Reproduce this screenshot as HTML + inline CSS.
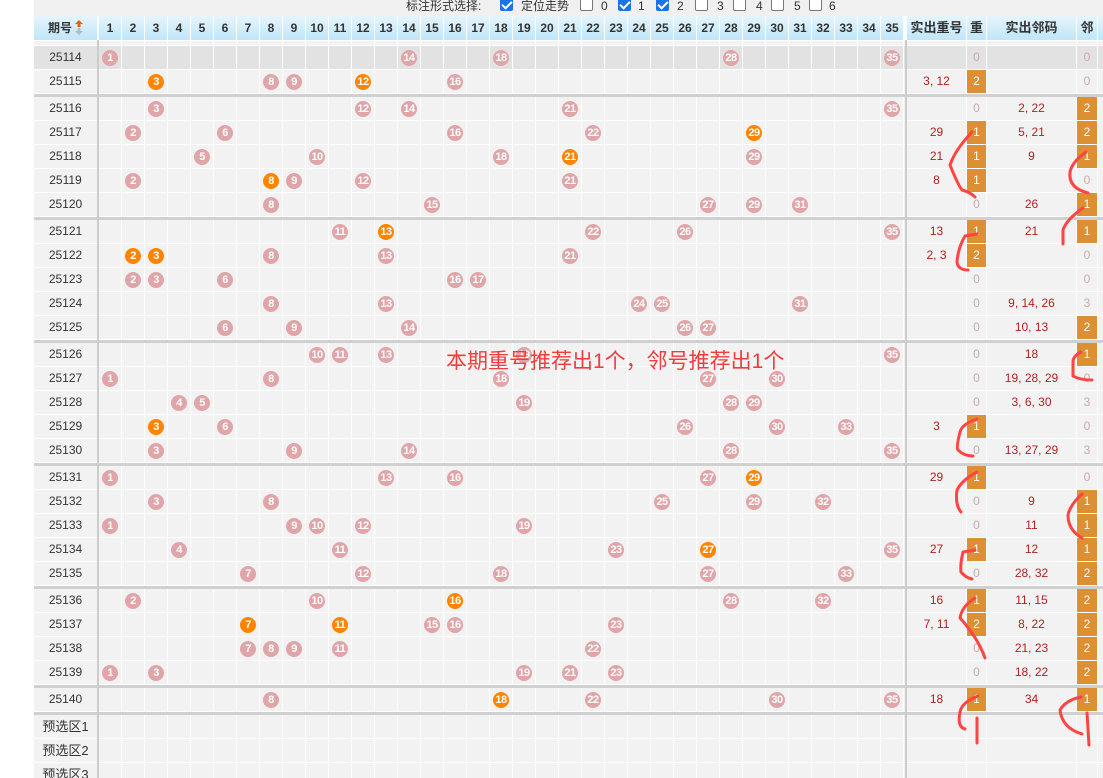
<!DOCTYPE html>
<html><head><meta charset="utf-8"><style>
*{margin:0;padding:0;box-sizing:border-box}
html,body{width:1103px;height:778px;overflow:hidden}
body{background:#fff;position:relative;font-family:"Liberation Sans","Noto Sans CJK SC",sans-serif;font-size:12px;color:#333}
.top{position:absolute;left:34px;top:0;width:1069px;height:16px;background:#f0f0f0}
.t{position:absolute;top:-1px;font-size:12px;color:#333;line-height:14px}
.cb{position:absolute;top:-2px;width:13px;height:13px;border:1px solid #777;border-radius:2px;background:#fff}
.cb.on{background:#1a73e8;border-color:#1a73e8}
.cb.on:after{content:"";position:absolute;left:3px;top:0px;width:4px;height:8px;border:solid #fff;border-width:0 2px 2px 0;transform:rotate(45deg)}
.r{position:absolute;left:0;width:1103px;height:23px}
.r>div{position:absolute;top:0;height:23px;background:#f2f2f2;text-align:center;line-height:23px}
.p{left:34px;width:63px;color:#333;font-size:12px}
.n{left:99px;width:806px;background:repeating-linear-gradient(to right,#f2f2f2 0 22px,#fff 22px 23px)!important}
.c1{left:907px;width:59px;color:#b22222}
.c2{left:967px;width:19px;color:#ccaaaa}
.c3{left:987px;width:89px;color:#b22222}
.c4{left:1077px;width:20px;color:#ccaaaa}
.c5{left:1098px;width:5px}
.bx{background:#dc8f33!important;color:#fff!important}
.hv>div{background:#e2e2e2}
.hv>.n{background:repeating-linear-gradient(to right,#e2e2e2 0 22px,#fff 22px 23px)!important}
.h>div{background:linear-gradient(#e6f5fc,#bfe6f9)!important;font-weight:bold;color:#333;font-size:12px;height:24px;line-height:24px}
.h>.n{background:none!important}
.hn{position:absolute;top:0;width:22px;height:24px;background:linear-gradient(#e6f5fc,#bfe6f9);text-align:center;font-weight:bold;font-size:12px;line-height:24px}
.b{position:absolute;top:4px;width:16px;height:16px;border-radius:50%;background:#e0a5a8;color:#fff;font-weight:bold;font-size:11px;line-height:16px;text-align:center;font-style:normal;letter-spacing:-.5px}
.o{background:#ff8400}
.sep{position:absolute;left:34px;width:1069px;height:3px;background:#d0d0d0}
.vl{position:absolute;top:40px;width:2px;height:738px;background:#ccc}
</style></head><body>
<div class="top"></div>
<span class="t" style="left:406px">标注形式选择:</span>
<span class="cb on" style="left:500px"></span><span class="t" style="left:521px">定位走势</span>
<span class="cb" style="left:580px"></span><span class="t" style="left:601px">0</span>
<span class="cb on" style="left:618px"></span><span class="t" style="left:638px">1</span>
<span class="cb on" style="left:656px"></span><span class="t" style="left:677px">2</span>
<span class="cb" style="left:695px"></span><span class="t" style="left:717px">3</span>
<span class="cb" style="left:733px"></span><span class="t" style="left:756px">4</span>
<span class="cb" style="left:771px"></span><span class="t" style="left:794px">5</span>
<span class="cb" style="left:809px"></span><span class="t" style="left:829px">6</span>

<div class="r h" style="top:16px;height:24px">
<div class="p" style="width:63px;text-align:left;padding-left:14px">期号<svg width="10" height="16" style="position:absolute;left:40px;top:4px"><path d="M5 0 L9 4 L6.5 4 L6.5 7 L3.5 7 L3.5 4 L1 4Z" fill="#e8620a"/><path d="M5 15 L9 11 L6.5 11 L6.5 8 L3.5 8 L3.5 11 L1 11Z" fill="#bbb"/></svg></div>
<div class="n" style="width:806px">
<span class="hn" style="left:0">1</span><span class="hn" style="left:23px">2</span><span class="hn" style="left:46px">3</span><span class="hn" style="left:69px">4</span><span class="hn" style="left:92px">5</span><span class="hn" style="left:115px">6</span><span class="hn" style="left:138px">7</span><span class="hn" style="left:161px">8</span><span class="hn" style="left:184px">9</span><span class="hn" style="left:207px">10</span><span class="hn" style="left:230px">11</span><span class="hn" style="left:253px">12</span><span class="hn" style="left:276px">13</span><span class="hn" style="left:299px">14</span><span class="hn" style="left:322px">15</span><span class="hn" style="left:345px">16</span><span class="hn" style="left:368px">17</span><span class="hn" style="left:391px">18</span><span class="hn" style="left:414px">19</span><span class="hn" style="left:437px">20</span><span class="hn" style="left:460px">21</span><span class="hn" style="left:483px">22</span><span class="hn" style="left:506px">23</span><span class="hn" style="left:529px">24</span><span class="hn" style="left:552px">25</span><span class="hn" style="left:575px">26</span><span class="hn" style="left:598px">27</span><span class="hn" style="left:621px">28</span><span class="hn" style="left:644px">29</span><span class="hn" style="left:667px">30</span><span class="hn" style="left:690px">31</span><span class="hn" style="left:713px">32</span><span class="hn" style="left:736px">33</span><span class="hn" style="left:759px">34</span><span class="hn" style="left:782px">35</span>
</div>
<div class="c1" style="width:59px;font-size:13px">实出重号</div><div class="c2" style="font-size:13px">重</div><div class="c3" style="font-size:13px">实出邻码</div><div class="c4" style="font-size:13px">邻</div><div class="c5"></div>
</div>
<div class="r" style="top:41px;height:4px"><div class="p" style="height:4px"></div><div class="n" style="height:4px"></div><div class="c1" style="height:4px"></div><div class="c2" style="height:4px"></div><div class="c3" style="height:4px"></div><div class="c4" style="height:4px"></div><div class="c5" style="height:4px"></div></div>

<div class="r hv" style="top:46px"><div class="p">25114</div><div class="n"></div><div class="c1"></div><div class="c2">0</div><div class="c3"></div><div class="c4">0</div><div class="c5"></div>
<i class="b" style="left:102px">1</i><i class="b" style="left:401px">14</i><i class="b" style="left:493px">18</i><i class="b" style="left:723px">28</i><i class="b" style="left:884px">35</i></div>
<div class="r" style="top:70px"><div class="p">25115</div><div class="n"></div><div class="c1">3, 12</div><div class="c2 bx">2</div><div class="c3"></div><div class="c4">0</div><div class="c5"></div>
<i class="b o" style="left:148px">3</i><i class="b" style="left:263px">8</i><i class="b" style="left:286px">9</i><i class="b o" style="left:355px">12</i><i class="b" style="left:447px">16</i></div>
<div class="sep" style="top:94px"></div>

<div class="r" style="top:97px"><div class="p">25116</div><div class="n"></div><div class="c1"></div><div class="c2">0</div><div class="c3">2, 22</div><div class="c4 bx">2</div><div class="c5"></div>
<i class="b" style="left:148px">3</i><i class="b" style="left:355px">12</i><i class="b" style="left:401px">14</i><i class="b" style="left:562px">21</i><i class="b" style="left:884px">35</i></div>
<div class="r" style="top:121px"><div class="p">25117</div><div class="n"></div><div class="c1">29</div><div class="c2 bx">1</div><div class="c3">5, 21</div><div class="c4 bx">2</div><div class="c5"></div>
<i class="b" style="left:125px">2</i><i class="b" style="left:217px">6</i><i class="b" style="left:447px">16</i><i class="b" style="left:585px">22</i><i class="b o" style="left:746px">29</i></div>
<div class="r" style="top:145px"><div class="p">25118</div><div class="n"></div><div class="c1">21</div><div class="c2 bx">1</div><div class="c3">9</div><div class="c4 bx">1</div><div class="c5"></div>
<i class="b" style="left:194px">5</i><i class="b" style="left:309px">10</i><i class="b" style="left:493px">18</i><i class="b o" style="left:562px">21</i><i class="b" style="left:746px">29</i></div>
<div class="r" style="top:169px"><div class="p">25119</div><div class="n"></div><div class="c1">8</div><div class="c2 bx">1</div><div class="c3"></div><div class="c4">0</div><div class="c5"></div>
<i class="b" style="left:125px">2</i><i class="b o" style="left:263px">8</i><i class="b" style="left:286px">9</i><i class="b" style="left:355px">12</i><i class="b" style="left:562px">21</i></div>
<div class="r" style="top:193px"><div class="p">25120</div><div class="n"></div><div class="c1"></div><div class="c2">0</div><div class="c3">26</div><div class="c4 bx">1</div><div class="c5"></div>
<i class="b" style="left:263px">8</i><i class="b" style="left:424px">15</i><i class="b" style="left:700px">27</i><i class="b" style="left:746px">29</i><i class="b" style="left:792px">31</i></div>
<div class="sep" style="top:217px"></div>

<div class="r" style="top:220px"><div class="p">25121</div><div class="n"></div><div class="c1">13</div><div class="c2 bx">1</div><div class="c3">21</div><div class="c4 bx">1</div><div class="c5"></div>
<i class="b" style="left:332px">11</i><i class="b o" style="left:378px">13</i><i class="b" style="left:585px">22</i><i class="b" style="left:677px">26</i><i class="b" style="left:884px">35</i></div>
<div class="r" style="top:244px"><div class="p">25122</div><div class="n"></div><div class="c1">2, 3</div><div class="c2 bx">2</div><div class="c3"></div><div class="c4">0</div><div class="c5"></div>
<i class="b o" style="left:125px">2</i><i class="b o" style="left:148px">3</i><i class="b" style="left:263px">8</i><i class="b" style="left:378px">13</i><i class="b" style="left:562px">21</i></div>
<div class="r" style="top:268px"><div class="p">25123</div><div class="n"></div><div class="c1"></div><div class="c2">0</div><div class="c3"></div><div class="c4">0</div><div class="c5"></div>
<i class="b" style="left:125px">2</i><i class="b" style="left:148px">3</i><i class="b" style="left:217px">6</i><i class="b" style="left:447px">16</i><i class="b" style="left:470px">17</i></div>
<div class="r" style="top:292px"><div class="p">25124</div><div class="n"></div><div class="c1"></div><div class="c2">0</div><div class="c3">9, 14, 26</div><div class="c4">3</div><div class="c5"></div>
<i class="b" style="left:263px">8</i><i class="b" style="left:378px">13</i><i class="b" style="left:631px">24</i><i class="b" style="left:654px">25</i><i class="b" style="left:792px">31</i></div>
<div class="r" style="top:316px"><div class="p">25125</div><div class="n"></div><div class="c1"></div><div class="c2">0</div><div class="c3">10, 13</div><div class="c4 bx">2</div><div class="c5"></div>
<i class="b" style="left:217px">6</i><i class="b" style="left:286px">9</i><i class="b" style="left:401px">14</i><i class="b" style="left:677px">26</i><i class="b" style="left:700px">27</i></div>
<div class="sep" style="top:340px"></div>

<div class="r" style="top:343px"><div class="p">25126</div><div class="n"></div><div class="c1"></div><div class="c2">0</div><div class="c3">18</div><div class="c4 bx">1</div><div class="c5"></div>
<i class="b" style="left:309px">10</i><i class="b" style="left:332px">11</i><i class="b" style="left:378px">13</i><i class="b" style="left:516px">19</i><i class="b" style="left:884px">35</i></div>
<div class="r" style="top:367px"><div class="p">25127</div><div class="n"></div><div class="c1"></div><div class="c2">0</div><div class="c3">19, 28, 29</div><div class="c4">0</div><div class="c5"></div>
<i class="b" style="left:102px">1</i><i class="b" style="left:263px">8</i><i class="b" style="left:493px">18</i><i class="b" style="left:700px">27</i><i class="b" style="left:769px">30</i></div>
<div class="r" style="top:391px"><div class="p">25128</div><div class="n"></div><div class="c1"></div><div class="c2">0</div><div class="c3">3, 6, 30</div><div class="c4">3</div><div class="c5"></div>
<i class="b" style="left:171px">4</i><i class="b" style="left:194px">5</i><i class="b" style="left:516px">19</i><i class="b" style="left:723px">28</i><i class="b" style="left:746px">29</i></div>
<div class="r" style="top:415px"><div class="p">25129</div><div class="n"></div><div class="c1">3</div><div class="c2 bx">1</div><div class="c3"></div><div class="c4">0</div><div class="c5"></div>
<i class="b o" style="left:148px">3</i><i class="b" style="left:217px">6</i><i class="b" style="left:677px">26</i><i class="b" style="left:769px">30</i><i class="b" style="left:838px">33</i></div>
<div class="r" style="top:439px"><div class="p">25130</div><div class="n"></div><div class="c1"></div><div class="c2">0</div><div class="c3">13, 27, 29</div><div class="c4">3</div><div class="c5"></div>
<i class="b" style="left:148px">3</i><i class="b" style="left:286px">9</i><i class="b" style="left:401px">14</i><i class="b" style="left:723px">28</i><i class="b" style="left:884px">35</i></div>
<div class="sep" style="top:463px"></div>

<div class="r" style="top:466px"><div class="p">25131</div><div class="n"></div><div class="c1">29</div><div class="c2 bx">1</div><div class="c3"></div><div class="c4">0</div><div class="c5"></div>
<i class="b" style="left:102px">1</i><i class="b" style="left:378px">13</i><i class="b" style="left:447px">16</i><i class="b" style="left:700px">27</i><i class="b o" style="left:746px">29</i></div>
<div class="r" style="top:490px"><div class="p">25132</div><div class="n"></div><div class="c1"></div><div class="c2">0</div><div class="c3">9</div><div class="c4 bx">1</div><div class="c5"></div>
<i class="b" style="left:148px">3</i><i class="b" style="left:263px">8</i><i class="b" style="left:654px">25</i><i class="b" style="left:746px">29</i><i class="b" style="left:815px">32</i></div>
<div class="r" style="top:514px"><div class="p">25133</div><div class="n"></div><div class="c1"></div><div class="c2">0</div><div class="c3">11</div><div class="c4 bx">1</div><div class="c5"></div>
<i class="b" style="left:102px">1</i><i class="b" style="left:286px">9</i><i class="b" style="left:309px">10</i><i class="b" style="left:355px">12</i><i class="b" style="left:516px">19</i></div>
<div class="r" style="top:538px"><div class="p">25134</div><div class="n"></div><div class="c1">27</div><div class="c2 bx">1</div><div class="c3">12</div><div class="c4 bx">1</div><div class="c5"></div>
<i class="b" style="left:171px">4</i><i class="b" style="left:332px">11</i><i class="b" style="left:608px">23</i><i class="b o" style="left:700px">27</i><i class="b" style="left:884px">35</i></div>
<div class="r" style="top:562px"><div class="p">25135</div><div class="n"></div><div class="c1"></div><div class="c2">0</div><div class="c3">28, 32</div><div class="c4 bx">2</div><div class="c5"></div>
<i class="b" style="left:240px">7</i><i class="b" style="left:355px">12</i><i class="b" style="left:493px">18</i><i class="b" style="left:700px">27</i><i class="b" style="left:838px">33</i></div>
<div class="sep" style="top:586px"></div>

<div class="r" style="top:589px"><div class="p">25136</div><div class="n"></div><div class="c1">16</div><div class="c2 bx">1</div><div class="c3">11, 15</div><div class="c4 bx">2</div><div class="c5"></div>
<i class="b" style="left:125px">2</i><i class="b" style="left:309px">10</i><i class="b o" style="left:447px">16</i><i class="b" style="left:723px">28</i><i class="b" style="left:815px">32</i></div>
<div class="r" style="top:613px"><div class="p">25137</div><div class="n"></div><div class="c1">7, 11</div><div class="c2 bx">2</div><div class="c3">8, 22</div><div class="c4 bx">2</div><div class="c5"></div>
<i class="b o" style="left:240px">7</i><i class="b o" style="left:332px">11</i><i class="b" style="left:424px">15</i><i class="b" style="left:447px">16</i><i class="b" style="left:608px">23</i></div>
<div class="r" style="top:637px"><div class="p">25138</div><div class="n"></div><div class="c1"></div><div class="c2">0</div><div class="c3">21, 23</div><div class="c4 bx">2</div><div class="c5"></div>
<i class="b" style="left:240px">7</i><i class="b" style="left:263px">8</i><i class="b" style="left:286px">9</i><i class="b" style="left:332px">11</i><i class="b" style="left:585px">22</i></div>
<div class="r" style="top:661px"><div class="p">25139</div><div class="n"></div><div class="c1"></div><div class="c2">0</div><div class="c3">18, 22</div><div class="c4 bx">2</div><div class="c5"></div>
<i class="b" style="left:102px">1</i><i class="b" style="left:148px">3</i><i class="b" style="left:516px">19</i><i class="b" style="left:562px">21</i><i class="b" style="left:608px">23</i></div>
<div class="sep" style="top:685px"></div>

<div class="r" style="top:688px"><div class="p">25140</div><div class="n"></div><div class="c1">18</div><div class="c2 bx">1</div><div class="c3">34</div><div class="c4 bx">1</div><div class="c5"></div>
<i class="b" style="left:263px">8</i><i class="b o" style="left:493px">18</i><i class="b" style="left:585px">22</i><i class="b" style="left:769px">30</i><i class="b" style="left:884px">35</i></div>
<div class="sep" style="top:712px"></div>

<div class="r" style="top:715px"><div class="p" style="font-size:13px">预选区1</div><div class="n"></div><div class="c1"></div><div class="c2"></div><div class="c3"></div><div class="c4"></div><div class="c5"></div></div>
<div class="r" style="top:739px"><div class="p" style="font-size:13px">预选区2</div><div class="n"></div><div class="c1"></div><div class="c2"></div><div class="c3"></div><div class="c4"></div><div class="c5"></div></div>
<div class="r" style="top:763px;height:15px"><div class="p" style="font-size:13px">预选区3</div><div class="n"></div><div class="c1"></div><div class="c2"></div><div class="c3"></div><div class="c4"></div><div class="c5"></div></div>

<div class="vl" style="left:97px"></div>
<div class="vl" style="left:905px"></div>

<div style="position:absolute;left:446px;top:349px;font-size:21px;color:#f03c3c;white-space:nowrap;line-height:26px">本期重号推荐出1个，邻号推荐出1个</div>

<svg width="1103" height="778" style="position:absolute;left:0;top:0" fill="none" stroke="#f44" stroke-width="3" stroke-linecap="round" stroke-linejoin="round">
<path d="M972 132 Q955 150 950 165 Q958 185 962 190 Q970 192 975 197"/>
<path d="M1086 152 Q1072 162 1070 172 Q1068 188 1088 193"/>
<path d="M1083 208 Q1066 220 1063 230 L1063 244"/>
<path d="M977 234 L965 236 Q958 248 957 262 Q958 270 968 270"/>
<path d="M1081 352 Q1073 356 1073 362 L1073 376 Q1080 380 1092 380"/>
<path d="M977 419 Q962 424 960 432 Q956 448 958 450 Q964 456 973 456"/>
<path d="M977 472 Q962 480 957 490 Q955 505 961 512"/>
<path d="M1082 494 Q1070 505 1068 515 Q1068 530 1082 538"/>
<path d="M975 550 L963 552 Q960 565 961 572 Q966 578 972 579"/>
<path d="M975 598 Q962 606 960 618 Q978 638 985 658"/>
<path d="M978 696 Q962 702 960 712 Q957 727 965 729"/>
<path d="M977 718 L977 743"/>
<path d="M1081 697 Q1066 700 1060 710 Q1062 728 1082 734"/>
<path d="M1087 713 L1089 745"/>
</svg>
</body></html>
